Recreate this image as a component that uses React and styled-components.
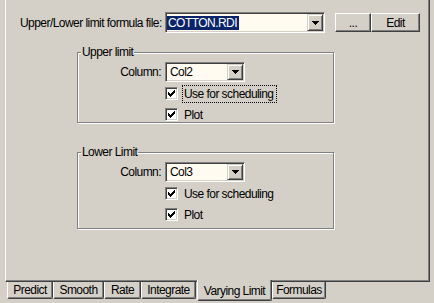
import React from 'react';
import styled, { createGlobalStyle } from 'styled-components';

const GlobalStyle = createGlobalStyle`
  html, body {
    margin: 0;
    padding: 0;
    background: #d4d0c8;
  }
  body {
    font-family: "Liberation Sans", Arial, sans-serif;
    font-size: 12px;
    letter-spacing: -0.55px;
    color: #000;
  }
`;

const Window = styled.div`
  width: 434px;
  height: 303px;
  overflow: hidden;
  background: #d4d0c8;
  display: flex;
  flex-direction: column;
`;

const Panel = styled.div`
  box-sizing: border-box;
  margin-left: 5px;
  width: 425px;
  height: 282px;
  border-left: 1px solid #fff;
  border-right: 1px solid #404040;
  border-bottom: 1px solid #404040;
  box-shadow: inset -1px -1px 0 #808080;
  display: flex;
  flex-direction: column;
`;

const FileRow = styled.div`
  display: flex;
  align-items: center;
  margin: 12px 0 0 14px;
  height: 21px;
`;

const Label = styled.span`
  width: ${({ $width }) => $width}px;
  flex: none;
  white-space: nowrap;
  text-align: ${({ $align }) => $align || 'left'};
  line-height: 14px;
`;

const Combo = styled.div`
  box-sizing: border-box;
  width: ${({ $width }) => $width}px;
  height: ${({ $height }) => $height}px;
  flex: none;
  background: #fffbf0;
  border-top: 1px solid #808080;
  border-left: 1px solid #808080;
  border-right: 1px solid #fff;
  border-bottom: 1px solid #fff;
  box-shadow: inset 1px 1px 0 #404040, inset -1px -1px 0 #d4d0c8;
  padding: 1px;
  display: flex;
  align-items: center;
`;

const ComboText = styled.span`
  flex: 1;
  display: flex;
  align-items: center;
  height: 100%;
  padding-left: ${({ $pad }) => $pad}px;
  white-space: nowrap;
`;

const Selection = styled.span`
  background: #0a246a;
  color: #fff;
  padding: 0 2px 0 1px;
  line-height: 14px;
`;

const DropButton = styled.div`
  box-sizing: border-box;
  width: 16px;
  height: 100%;
  flex: none;
  background: #d4d0c8;
  border-top: 1px solid #d4d0c8;
  border-left: 1px solid #d4d0c8;
  border-right: 1px solid #404040;
  border-bottom: 1px solid #404040;
  box-shadow: inset 1px 1px 0 #fff, inset -1px -1px 0 #808080;
  display: flex;
  align-items: center;
  justify-content: center;
`;

const Button = styled.div`
  box-sizing: border-box;
  width: ${({ $width }) => $width}px;
  height: 19px;
  flex: none;
  background: #d4d0c8;
  border-top: 1px solid #fff;
  border-left: 1px solid #fff;
  border-right: 1px solid #404040;
  border-bottom: 1px solid #404040;
  box-shadow: inset -1px -1px 0 #808080;
  display: flex;
  align-items: center;
  justify-content: center;
  line-height: 14px;
`;

const ButtonGroup = styled.div`
  display: flex;
  margin-left: 10px;
`;

const GroupBox = styled.div`
  position: relative;
  box-sizing: border-box;
  margin: ${({ $top }) => $top}px 0 0 71px;
  width: 257px;
  height: ${({ $height }) => $height}px;
  border: 1px solid #808080;
  box-shadow: inset 1px 1px 0 #fff, 1px 1px 0 #fff;
  padding-top: 9px;
`;

const Legend = styled.span`
  position: absolute;
  top: -8px;
  left: 3px;
  padding: 0 1px;
  background: #d4d0c8;
  line-height: 15px;
`;

const ColumnRow = styled.div`
  display: grid;
  grid-template-columns: 83px auto;
  column-gap: 4px;
  align-items: center;
`;

const CheckList = styled.div`
  display: flex;
  flex-direction: column;
  gap: 8px;
  margin: 5px 0 0 87px;
`;

const CheckRow = styled.div`
  display: flex;
  align-items: center;
  height: 13px;
`;

const Box = styled.div`
  box-sizing: border-box;
  width: 13px;
  height: 13px;
  flex: none;
  background: #fff;
  border-top: 1px solid #808080;
  border-left: 1px solid #808080;
  border-right: 1px solid #fff;
  border-bottom: 1px solid #fff;
  box-shadow: inset 1px 1px 0 #404040, inset -1px -1px 0 #d4d0c8;
  display: flex;
  align-items: center;
  justify-content: center;
`;

const CheckLabel = styled.span`
  margin-left: 4px;
  padding: 1px 2px 1px 1px;
  line-height: 14px;
  border: 1px dotted ${({ $focused }) => ($focused ? '#000' : 'transparent')};
  white-space: nowrap;
`;

const TabStrip = styled.div`
  display: flex;
  align-items: flex-start;
  padding-left: 7px;
`;

const Tab = styled.div`
  position: relative;
  box-sizing: border-box;
  width: ${({ $width }) => $width}px;
  height: ${({ $active }) => ($active ? 21 : 17)}px;
  margin-top: ${({ $active }) => ($active ? -2 : 0)}px;
  margin-left: ${({ $gap }) => $gap || 0}px;
  background: #d4d0c8;
  border-left: 1px solid #fff;
  border-right: 1px solid #404040;
  border-bottom: 1px solid #404040;
  border-bottom-left-radius: 2px;
  border-bottom-right-radius: 2px;
  box-shadow: inset -1px -1px 0 #808080;
  display: flex;
  align-items: center;
  justify-content: center;
  padding-top: ${({ $active }) => ($active ? 2 : 0)}px;
  line-height: 14px;
  white-space: nowrap;
  z-index: ${({ $active }) => ($active ? 1 : 0)};
`;

const Check = () => (
  <svg width="7" height="7" viewBox="0 0 7 7" shapeRendering="crispEdges">
    <path
      d="M0 2h1v3H0z M1 3h1v3H1z M2 4h1v3H2z M3 3h1v3H3z M4 2h1v3H4z M5 1h1v3H5z M6 0h1v3H6z"
      fill="#000"
    />
  </svg>
);

const Arrow = () => (
  <svg width="7" height="4" viewBox="0 0 7 4" shapeRendering="crispEdges">
    <path d="M0 0h7v1H0z M1 1h5v1H1z M2 2h3v1H2z M3 3h1v1H3z" fill="#000" />
  </svg>
);

const LimitGroup = ({ title, column, top, height, focused }) => (
  <GroupBox $top={top} $height={height}>
    <Legend>{title}</Legend>
    <ColumnRow>
      <Label $align="right">Column:</Label>
      <Combo $width={80} $height={20}>
        <ComboText $pad={3}>{column}</ComboText>
        <DropButton>
          <Arrow />
        </DropButton>
      </Combo>
    </ColumnRow>
    <CheckList>
      <CheckRow>
        <Box>
          <Check />
        </Box>
        <CheckLabel $focused={focused}>Use for scheduling</CheckLabel>
      </CheckRow>
      <CheckRow>
        <Box>
          <Check />
        </Box>
        <CheckLabel>Plot</CheckLabel>
      </CheckRow>
    </CheckList>
  </GroupBox>
);

const tabs = [
  { name: 'Predict', width: 46 },
  { name: 'Smooth', width: 51 },
  { name: 'Rate', width: 37 },
  { name: 'Integrate', width: 55 },
  { name: 'Varying Limit', width: 75, active: true, gap: 1 },
  { name: 'Formulas', width: 54 },
];

export default function App() {
  return (
    <>
      <GlobalStyle />
      <Window>
        <Panel>
          <FileRow>
            <Label $width={145}>Upper/Lower limit formula file:</Label>
            <Combo $width={160} $height={21}>
              <ComboText $pad={0}>
                <Selection>COTTON.RDI</Selection>
              </ComboText>
              <DropButton>
                <Arrow />
              </DropButton>
            </Combo>
            <ButtonGroup>
              <Button $width={36}>...</Button>
              <Button $width={49}>Edit</Button>
            </ButtonGroup>
          </FileRow>
          <LimitGroup title="Upper limit" column="Col2" top={19} height={71} focused />
          <LimitGroup title="Lower Limit" column="Col3" top={29} height={77} />
        </Panel>
        <TabStrip>
          {tabs.map((t) => (
            <Tab key={t.name} $width={t.width} $active={t.active} $gap={t.gap}>
              {t.name}
            </Tab>
          ))}
        </TabStrip>
      </Window>
    </>
  );
}
